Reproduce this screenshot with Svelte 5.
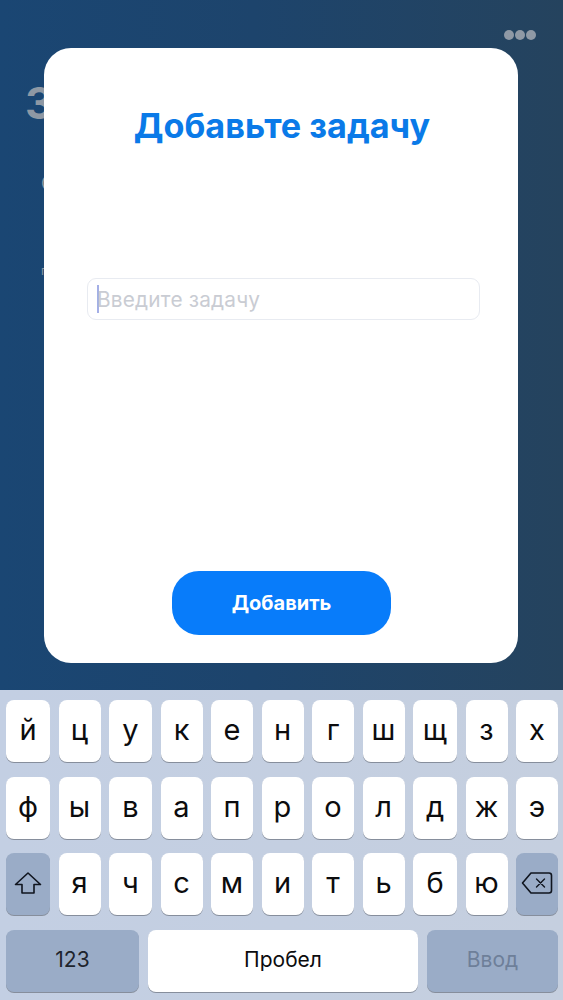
<script>
  const widths = [44, 42, 43, 42, 42, 42, 42, 42, 44, 42, 42];
  const row1 = [...'йцукенгшщзх'];
  const row2 = [...'фывапролджэ'];
  const row3 = [...'ячсмитьбю'];
</script>

<div class="screen">
  <div class="behind">
    <div class="dots"><i></i><i></i><i></i></div>
    <div class="bg-title">З</div>
    <div class="bg-sub">С</div>
    <div class="bg-small">г</div>
  </div>

  <div class="modal">
    <h1>Добавьте задачу</h1>
    <div class="field">
      <span class="caret"></span>
      <span class="placeholder">Введите задачу</span>
    </div>
    <button class="add">Добавить</button>
  </div>

  <div class="keyboard">
    <div class="row">
      {#each row1 as k, i}
        <div class="key" style="width:{widths[i]}px">{k}</div>
      {/each}
    </div>
    <div class="row">
      {#each row2 as k, i}
        <div class="key" style="width:{widths[i]}px">{k}</div>
      {/each}
    </div>
    <div class="row">
      <div class="key fn w44">
        <svg width="28" height="24" viewBox="0 0 28 24" fill="none" stroke="#10151f" stroke-width="1.6" stroke-linejoin="round"><path d="M14 2 L26.500 13.500 H20 V22 H8 V13.500 H1.500 Z"/></svg>
      </div>
      {#each row3 as k, i}
        <div class="key" style="width:{widths[i + 1]}px">{k}</div>
      {/each}
      <div class="key fn w42">
        <svg width="32" height="24" viewBox="0 0 32 24" fill="none" stroke="#10151f" stroke-width="1.6" stroke-linejoin="round" stroke-linecap="round"><path d="M10 2 H28 a2.500 2.500 0 0 1 2.500 2.500 V19.500 a2.500 2.500 0 0 1 -2.500 2.500 H10 L1.500 12 Z"/><path d="M15.500 8 L23.500 16 M23.500 8 L15.500 16" stroke-width="1.400"/></svg>
      </div>
    </div>
    <div class="row bottom">
      <div class="key fn num">123</div>
      <div class="key space">Пробел</div>
      <div class="key fn enter">Ввод</div>
    </div>
  </div>
</div>

<style>
  :global(body) { margin: 0; }
  .screen {
    position: relative;
    width: 563px;
    height: 1000px;
    overflow: hidden;
    display: flex;
    flex-direction: column;
    font-family: Inter, "Liberation Sans", sans-serif;
    background: linear-gradient(90deg, #1a4673 0%, #1d446c 45%, #25435e 100%);
  }
  .behind {
    flex: 1;
    padding: 30px 27px 0 25px;
    display: flex;
    flex-direction: column;
    overflow: hidden;
  }
  .dots { display: flex; gap: 1px; justify-content: flex-end; }
  .dots i { width: 10px; height: 10px; border-radius: 50%; background: #8f99a5; }
  .bg-title { margin-top: 37px; font-size: 44px; line-height: 52px; font-weight: 700; color: #8e98a4; }
  .bg-sub { margin-top: 44px; margin-left: 16px; font-size: 18px; line-height: 22px; color: #8e98a4; }
  .bg-small { margin-top: 68px; margin-left: 16px; font-size: 12px; color: #8e98a4; }
  .modal {
    position: absolute;
    left: 44px;
    top: 48px;
    width: 474px;
    height: 615px;
    box-sizing: border-box;
    background: #fff;
    border-radius: 27px;
    display: flex;
    flex-direction: column;
    align-items: center;
  }
  h1 {
    margin: 56px 0 0 2px;
    color: #0a7ae8;
    font-size: 34.200px;
    line-height: 44px;
    font-weight: 700;
  }
  .field {
    margin: 130px 0 0 4px;
    width: 393px;
    height: 42px;
    box-sizing: border-box;
    border: 1px solid #e8ebf1;
    border-radius: 9px;
    padding-left: 9px;
    display: flex;
    align-items: center;
  }
  .caret { width: 2.500px; height: 28px; background: #a4afe6; flex: none; margin-right: -2px; }
  .placeholder { color: #c9ccd3; font-size: 20.800px; letter-spacing: 0.2px; }
  .add {
    margin: 251px 0 0 1px;
    width: 219px;
    height: 64px;
    border: 0;
    border-radius: 27px;
    background: #087cfa;
    color: #fff;
    font-family: inherit;
    font-size: 20px;
    font-weight: 700;
  }
  .keyboard {
    flex: none;
    height: 310px;
    box-sizing: border-box;
    padding-top: 10px;
    background: linear-gradient(90deg, #c3cfe3, #c5cfdf);
    display: flex;
    flex-direction: column;
    gap: 14.700px;
  }
  .row {
    display: flex;
    justify-content: center;
    gap: 8.500px;
    height: 62px;
    padding: 0 5px 0 6px;
  }
  .key {
    box-sizing: border-box;
    background: #fff;
    border-radius: 8px;
    box-shadow: 0 1px 0 #868e9c;
    display: flex;
    align-items: center;
    justify-content: center;
    color: #0c0c0e;
    font-family: Inter, "Liberation Sans", sans-serif;
    font-size: 29px;
    padding-bottom: 3px;
  }
  .fn { background: #9aacc7; }
  .w44 { width: 44px; }
  .w42 { width: 42px; }
  .bottom { gap: 9px; }
  .num { width: 133px; font-size: 21px; color: #20242c; }
  .space { width: 270px; font-size: 21px; }
  .enter { width: 131px; font-size: 21px; color: #6e7f99; }
</style>
